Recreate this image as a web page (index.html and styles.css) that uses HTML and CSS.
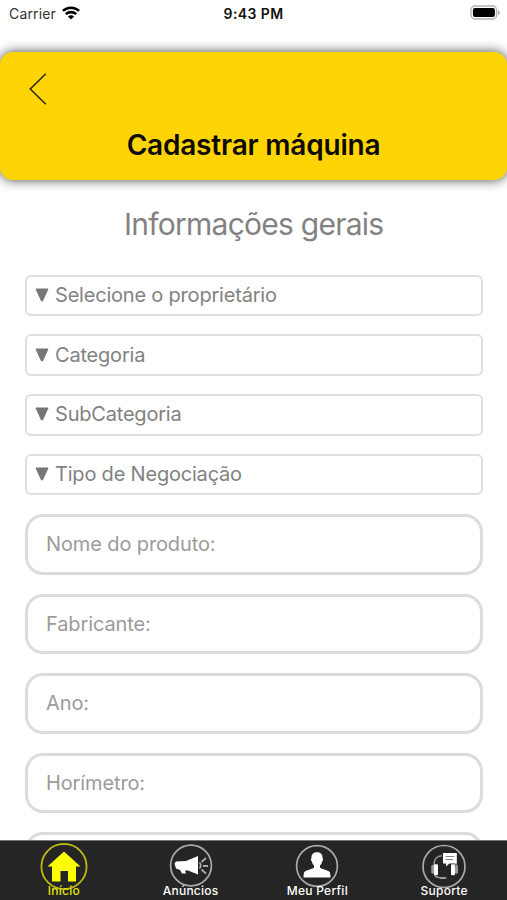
FILE: index.html
```html
<!DOCTYPE html>
<html lang="pt">
<head>
<meta charset="utf-8">
<title>Cadastrar máquina</title>
<link rel="stylesheet" href="styles.css">
</head>
<body>
<div class="screen">
  <div class="status">
    <div class="status-left"><span class="carrier">Carrier</span>
      <svg class="wifi" width="18" height="14" viewBox="0 0 18 14"><g fill="none" stroke="#000" stroke-width="2.6"><path d="M.9 4.9C5.4.6 12.6.6 17.1 4.9"/><path d="M3.8 8.1c2.900-2.700 7.500-2.700 10.400 0"/></g><path d="M5.900 10.400c1.700-1.600 4.500-1.600 6.200 0L9 13.500z"/></svg>
    </div>
    <span class="clock">9:43 PM</span>
    <svg class="battery" width="31" height="16" viewBox="0 0 31 16"><rect x="1" y="1" width="25.6" height="13" rx="4" fill="#fff" stroke="#b3b3b3" stroke-width="1.4"/><rect x="2.9" y="2.9" width="22" height="9.2" rx="2"/><path d="M28 5v5.2c2.2-.8 2.2-4.4 0-5.2z" fill="#aaa"/></svg>
  </div>
  <header class="header">
    <svg class="back" width="20" height="34" viewBox="0 0 20 34"><path d="M17.8 1.8L2.300 17l15.500 15.200" fill="none" stroke="#332b00" stroke-width="1.6"/></svg>
    <h1 class="title">Cadastrar máquina</h1>
  </header>
  <main class="form">
    <h2 class="subtitle">Informações gerais</h2>
    <div class="selects">
      <div class="select"><svg class="arrow" width="14" height="14" viewBox="0 0 14 14"><path d="M1 1h12L7.500 13h-1z" fill="#777" stroke="#777" stroke-linejoin="round"/></svg><span>Selecione o proprietário</span></div>
      <div class="select"><svg class="arrow" width="14" height="14" viewBox="0 0 14 14"><path d="M1 1h12L7.500 13h-1z" fill="#777" stroke="#777" stroke-linejoin="round"/></svg><span>Categoria</span></div>
      <div class="select"><svg class="arrow" width="14" height="14" viewBox="0 0 14 14"><path d="M1 1h12L7.500 13h-1z" fill="#777" stroke="#777" stroke-linejoin="round"/></svg><span>SubCategoria</span></div>
      <div class="select"><svg class="arrow" width="14" height="14" viewBox="0 0 14 14"><path d="M1 1h12L7.500 13h-1z" fill="#777" stroke="#777" stroke-linejoin="round"/></svg><span>Tipo de Negociação</span></div>
    </div>
    <div class="inputs">
      <div class="input">Nome do produto:</div>
      <div class="input">Fabricante:</div>
      <div class="input">Ano:</div>
      <div class="input">Horímetro:</div>
      <div class="input"></div>
    </div>
  </main>
  <nav class="tabs">
    <div class="tab active">
      <svg class="icon" width="48" height="48" viewBox="0 0 48 48"><circle cx="24" cy="24.500" r="22.6" fill="none" stroke="#bcbc10" stroke-width="1.8"/><path d="M24 9.500L40.500 24.500h-4.500V39.500h-8V29h-7.500v10.500H12V24.500H7.500z" fill="#ff0"/></svg>
      <span class="label">Início</span>
    </div>
    <div class="tab">
      <svg class="icon" width="48" height="48" viewBox="0 0 48 48"><circle cx="24" cy="23.500" r="20.400" fill="none" stroke="#aaa" stroke-width="1.700"/><path d="M7.500 21.500l1.500-2 10-.5 12-5v18.500l-10-4h-3l1 3h-4l-2-3.500-4-1.500z" fill="#fff"/><path d="M32.500 20.500q2.500 3 0 6M34.500 20l4.500-4M36 24h5M34.500 27.500l4.500 4" fill="none" stroke="#aaa" stroke-width="1.800"/></svg>
      <span class="label">Anúncios</span>
    </div>
    <div class="tab">
      <svg class="icon" width="48" height="48" viewBox="0 0 48 48"><circle cx="24" cy="24" r="20.400" fill="none" stroke="#aaa" stroke-width="1.700"/><path d="M24 10.300c4 0 5.800 2.400 5.500 6 1.200.5.300 3-.5 3.400-.3 1.700-1 2.800-2 3.800v2.200c2 1.800 8 2 9.600 4.300.7 1 .9 3 .9 5.500h-27c0-2.500.2-4.500.9-5.500 1.600-2.300 7.600-2.500 9.600-4.300v-2.200c-1-1-1.700-2.100-2-3.800-.8-.4-1.700-2.900-.5-3.400-.3-3.600 1.500-6 5.500-6z" fill="#fff"/></svg>
      <span class="label">Meu Perfil</span>
    </div>
    <div class="tab">
      <svg class="icon" width="48" height="48" viewBox="0 0 48 48"><circle cx="24" cy="24.500" r="21" fill="none" stroke="#aaa" stroke-width="1.700"/><path d="M14 23c0-6 3-9.300 8-9.300M36 20.500V23M14.500 32.500c.5 2.500 2.500 3.300 7 3.300" fill="none" stroke="#999" stroke-width="1.400"/><path d="M20.500 36h5" stroke="#999" stroke-width="1.800" stroke-linecap="round"/><rect x="11.300" y="22.700" width="3" height="9" rx="1.500" fill="#999"/><rect x="14" y="22.200" width="4" height="11" rx="1" fill="#fff"/><rect x="31" y="22.200" width="4" height="11" rx="1" fill="#fff"/><rect x="35" y="22.700" width="3" height="9" rx="1.500" fill="#999"/><path d="M23 11h13.800v10.500h-7.500L26 24.500v-3h-3z" fill="#fff"/><path d="M25.500 14.500h9M25.500 17.500h7.500" stroke="#888" stroke-width="1"/></svg>
      <span class="label">Suporte</span>
    </div>
  </nav>
</div>
</body>
</html>
```
FILE: styles.css
```css
* { box-sizing: border-box; }
body { margin: 0; background: #fff; font-family: Inter, "Liberation Sans", sans-serif; }
.screen { width: 507px; height: 900px; overflow: hidden; display: flex; flex-direction: column; }
.status { height: 52px; flex: none; display: grid; grid-template-columns: 1fr auto 1fr; align-items: start; padding: 5px 6px 0 9px; }
.status-left { display: flex; align-items: flex-start; gap: 6px; }
.carrier { font-size: 14px; line-height: 18px; letter-spacing: .15px; color: #333; }
.wifi { display: block; margin-top: 1px; }
.clock { font-size: 14px; line-height: 18px; font-weight: 600; letter-spacing: .4px; margin-right: 3px; color: #111; }
.battery { justify-self: end; display: block; }
.header { height: 128px; flex: none; position: relative; z-index: 1; background: #ffd405; border-radius: 13px; box-shadow: 0 0 12px rgba(0,0,0,.72); padding: 20px 28px 0; }
.back { display: block; }
.title { margin: 21px 0 0; text-align: center; font-size: 28px; line-height: 36px; font-weight: 600; letter-spacing: -.2px; color: #0d0b00; }
.form { flex: 1; min-height: 0; overflow: hidden; padding: 0 24.500px 0 25px; }
.subtitle { margin: 24px 0 30.500px; text-align: center; font-size: 30px; line-height: 40px; font-weight: 400; letter-spacing: -.75px; color: #828282; }
.selects { display: flex; flex-direction: column; gap: 18.300px; }
.select { height: 41.500px; border: 2px solid #dfdfdf; border-radius: 6px; display: flex; align-items: center; gap: 6px; padding: 0 0 1px 8px; font-size: 20px; letter-spacing: -.2px; color: #828282; }
.arrow { display: block; flex: none; }
.inputs { display: flex; flex-direction: column; gap: 19px; margin-top: 19px; }
.input { height: 60.500px; flex: none; border: 3.500px solid #dcdcdc; border-radius: 18px; padding: 0 18px 1px; display: flex; align-items: center; font-size: 20px; letter-spacing: -.12px; color: #9b9b9b; }
.tabs { height: 60px; flex: none; background: #252525; border-top: 1px solid #777; display: grid; grid-template-columns: repeat(4, 1fr); }
.tab { display: flex; flex-direction: column; align-items: center; color: #fff; padding: 1px 0 0 1px; }
.icon { display: block; flex: none; }
.label { margin-top: -7px; font-size: 12px; line-height: 16px; font-weight: 500; letter-spacing: .25px; position: relative; }
.active .label { color: #e2e20c; }
```
